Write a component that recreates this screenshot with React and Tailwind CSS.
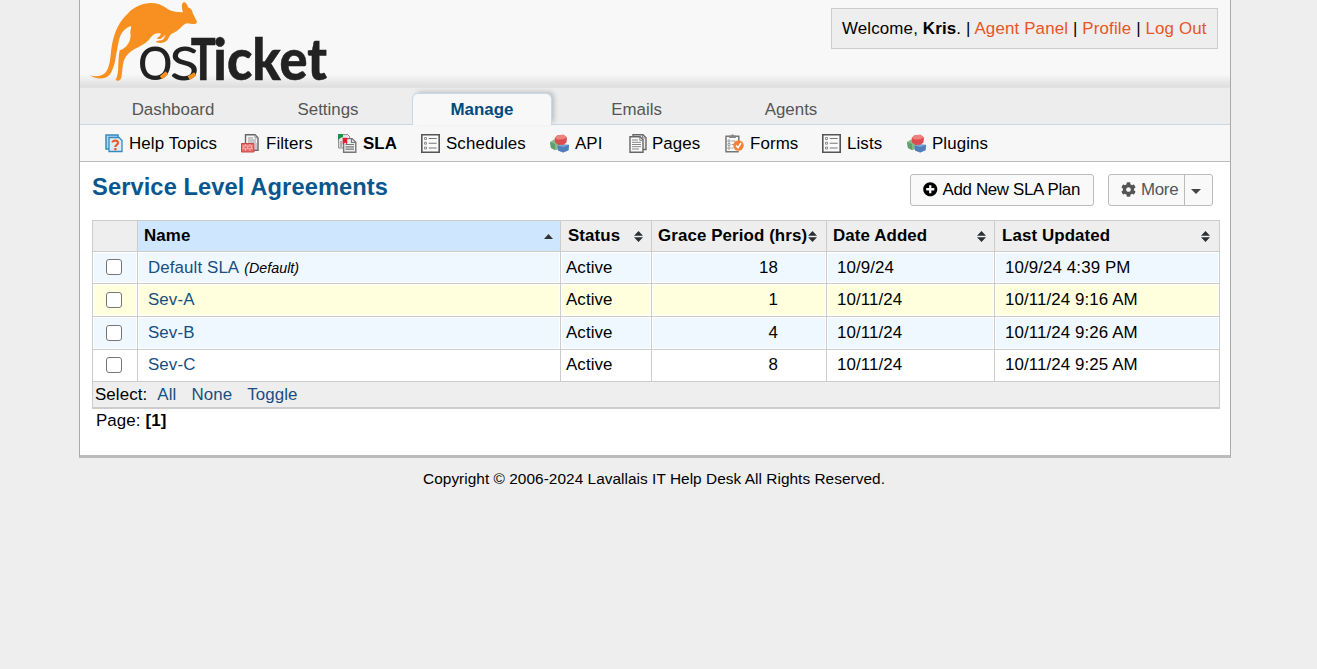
import React from "react";
import { FaPlusCircle, FaCog } from "react-icons/fa";

function Logo() {
  return (
    <svg className="h-[92px] w-[260px] shrink-0 overflow-visible" viewBox="0 0 780 276">
      <path
        fill="#f79020"
        d="M30 226C48 231 66 230 78 216C94 194 90 158 98 124C106 88 122 60 143 41C176 6 226 -1 260 25C279 38 294 36 309 37C304 20 304 10 312 6C320 9 323 15 324 22C331 24 337 29 338 39L351 65C350 74 340 73 322 70C306 73 300 91 280 99C270 102 268 111 262 121C254 129 240 131 227 126C232 120 242 124 250 118L257 104C249 109 244 121 231 116C233 110 239 111 243 101C224 97 217 107 207 119C190 140 157 143 139 168C126 185 129 206 124 232C122 243 113 244 107 240C119 217 112 185 119 151C142 145 155 120 151 99C150 88 158 77 150 79C129 88 120 104 115 130C107 167 106 202 89 224C74 241 44 237 30 226Z"
      />
      <g fontFamily="Lato, sans-serif" fontWeight="300" fontSize="190" fill="#222" stroke="#222" strokeWidth="6">
        <text x="173" y="238" textLength="105" lengthAdjust="spacingAndGlyphs">o</text>
        <text x="270" y="238" textLength="87" lengthAdjust="spacingAndGlyphs">s</text>
      </g>
      <path d="M243 233L261 218M326 234L346 222" stroke="#f79020" strokeWidth="12" fill="none" />
      <text y="240" fontFamily="Lato, sans-serif" fontWeight="900" fontSize="174" fill="#222" stroke="#222" strokeWidth="1.5">
        <tspan x="332" textLength="75" lengthAdjust="spacingAndGlyphs">T</tspan><tspan x="400" textLength="341" lengthAdjust="spacingAndGlyphs">icket</tspan>
      </text>
    </svg>
  );
}

function HelpIcon() {
  return (
    <>
      <path d="M1 1h12v14H1z" fill="#acd9f4" stroke="#3689bd" strokeWidth="1.5" />
      <path d="M4 3.5h10l3 3v11H4z" fill="#d9eefb" stroke="#3689bd" strokeWidth="1.3" />
      <path d="M7.5 8.5C7.5 6 13 6 13 9c0 2-2.7 1.8-2.7 4" fill="none" stroke="#f15a24" strokeWidth="2.2" />
      <path d="M9.2 14h2.3v2.3H9.2z" fill="#f15a24" />
    </>
  );
}
function FilterIcon() {
  return (
    <>
      <path d="M4.5 10V.7h9.5l3 3v12.5h-5" fill="#f4f4f4" stroke="#666" strokeWidth="1.4" />
      <path d="M14 1v3h3M7 4h5M7 6h8M7 8h8M14 10h2M14 12h2M14 14h2" fill="none" stroke="#999" />
      <path d="M.5 9.5h12.5v8.5H.5z" fill="#e46b6b" stroke="#c74848" />
      <path d="M1 12h11M1 14.7h11M4.5 10v2M9 10v2M2.8 12v2.7M6.7 12v2.7M10.5 12v2.7M4.5 15v2M9 15v2" stroke="#f7bcbc" strokeWidth=".8" />
    </>
  );
}
function SlaIcon() {
  return (
    <>
      <path d="M.6.6h9l2 2V14H.6z" fill="#e8e8e8" stroke="#888" />
      <path d="M0 0h5v3L2.5 4 0 6z" fill="#159447" />
      <path d="M5.6 4.6h8.5l3.7 3.6v10H5.6z" fill="#eee" stroke="#777" strokeWidth="1.4" />
      <path d="M13.5 5v3.5h4M7.5 10.5h8.5M7.5 12.8h8.5M7.5 15.2h8.5M2 8h2M2 10h2M2 12h2" fill="none" stroke="#777" strokeWidth="1.2" />
      <path d="M4.7 3.7h4.5v6.8L7 8.4l-2.3 2.1z" fill="#e51c2f" />
    </>
  );
}
function ListIcon() {
  return (
    <>
      <path d="M.8.8h17.4v17.4H.8z" fill="#fafafa" stroke="#555" strokeWidth="1.6" />
      <path d="M3.5 3.5h2v2h-2zM3.5 8.2h2v2h-2zM3.5 13h2v2h-2z" fill="none" stroke="#777" strokeWidth=".8" />
      <path d="M7.7 4.5h8M7.7 9.3h8M7.7 14h8" stroke="#777" strokeWidth="1.1" />
    </>
  );
}
function BlocksIcon() {
  return (
    <>
      <path d="M0 8l4-2.5 6 1.7v7l-4.5 2L1 14z" fill="#86b98a" />
      <path d="M0 8l5 2.1v6L1 14z" fill="#5f9e6e" />
      <path d="M7.5 11.5l5-1.5 6.5.7-.5 5.5L13.2 18.5 8 16.5z" fill="#7ba5d6" />
      <path d="M7.5 11.5l5.7 1.5L19 10.7l-.5 5.5-5.3 2.3L8 16.5z" fill="#507fb9" />
      <path d="M4.7 4L7.5 1.2l6-.4L17 3.5l-.5 5-3 2.3-5 .2L5 8.5z" fill="#dd4d4f" />
      <path d="M4.7 4L7.5 1.2l6-.4L17 3.5l-4 1.8-5 .2z" fill="#f0827e" />
    </>
  );
}
function PagesIcon() {
  return (
    <>
      <path d="M4 .8h10l3 3v11.7H4z" fill="#eee" stroke="#666" strokeWidth="1.4" />
      <path d="M1 2.8h10l3 3v12.4H1z" fill="#fafafa" stroke="#666" strokeWidth="1.4" />
      <path d="M10.8 3v3.4H14M13.5 1v3H17M3 6h6M3 8.3h9M3 10.5h9M3 12.7h9M3 15h7" fill="none" stroke="#888" />
    </>
  );
}
function FormsIcon() {
  return (
    <>
      <path d="M13.8 7V2.3H1v15.5h12.8" fill="#fafafa" stroke="#777" strokeWidth="1.5" />
      <path d="M4 1.5h2L7.5 0 9 1.5h2V4H4z" fill="#888" />
      <path d="M3 6h2v2H3zM3 9.5h2v2H3zM3 13h2v2H3zM6.5 7h4M6.5 10.5h3M6.5 14h2" fill="none" stroke="#999" strokeWidth=".9" />
      <circle cx="13.5" cy="11.5" r="5.2" fill="#f58232" />
      <path d="M11 11.5l2 2.2 3-4.7" fill="none" stroke="#fff" strokeWidth="1.5" />
    </>
  );
}

const tools = [
  ["Help Topics", HelpIcon, "w-[136px] gap-[5px]"],
  ["Filters", FilterIcon, "w-[97px] gap-[6px]"],
  ["SLA", SlaIcon, "w-[83px] gap-[6px] font-bold"],
  ["Schedules", ListIcon, "w-[129px] gap-[6px]"],
  ["API", BlocksIcon, "w-[79px] gap-[6px]"],
  ["Pages", PagesIcon, "w-[96px] gap-[4px]"],
  ["Forms", FormsIcon, "w-[97px] gap-[6px]"],
  ["Lists", ListIcon, "w-[85px] gap-[6px]"],
  ["Plugins", BlocksIcon, "w-[90px] gap-[6px]"],
];

function Sort() {
  return (
    <svg className="mt-[2px] h-[11px] w-[9px] shrink-0" viewBox="0 0 9 11">
      <path d="M4.5 0L9 4.8H0zM0 6.2h9L4.5 11z" fill="#2b3035" />
    </svg>
  );
}

const cols = "grid grid-cols-[45px_423px_91px_175px_168px_225px]";
const head = "flex items-center justify-between border-l border-[#ccc] pb-px";
const cell = "flex items-center border-l border-[#ccc] shadow-[inset_0_0_0_1px_#fff]";

const rows = [
  ["Default SLA", "18", "10/9/24", "10/9/24 4:39 PM", "h-[32px] bg-[#f0f8ff]", "pt-px"],
  ["Sev-A", "1", "10/11/24", "10/11/24 9:16 AM", "h-[33px] bg-[#ffffdd]", "pb-px"],
  ["Sev-B", "4", "10/11/24", "10/11/24 9:26 AM", "h-[33px] bg-[#f0f8ff]", "pb-px"],
  ["Sev-C", "8", "10/11/24", "10/11/24 9:25 AM", "h-[32px] bg-white", "pb-px"],
];

export default function App() {
  return (
    <div className="min-h-screen bg-[#eee] font-['Liberation_Sans',Arial,sans-serif] text-[16.9px] leading-5 tracking-[0.1px] text-black">
      <main className="ml-[79px] h-[458px] w-[1152px] border-x border-b-[3px] border-x-[#aaa] border-b-[#bbb] bg-white">
        <header className="flex h-[87px] items-start justify-between bg-[linear-gradient(#f8f8f8_74px,#dedede_87px)] pr-3">
          <Logo />
          <div className="mt-2 h-[41px] w-[387px] whitespace-nowrap border border-[#ccc] bg-[#eee] pl-[10px] pt-[10px] tracking-[0.15px]">
            Welcome, <b>Kris</b>. | <a className="text-[#e65524]">Agent Panel</a> | <a className="text-[#e65524]">Profile</a> | <a className="text-[#e65524]">Log Out</a>
          </div>
        </header>
        <nav className="flex h-[38px] border-b border-t border-b-[#c5d9e8] border-t-[#e2e2e2] bg-[#ededed] tracking-normal text-[#555]">
          <span className="w-[186px] pt-[12px] text-center">Dashboard</span>
          <span className="w-[124px] pt-[12px] text-center">Settings</span>
          <span className="ml-[22px] mt-[5px] h-[32px] w-[140px] rounded-t-[6px] border border-b-0 border-[#c5d9e8] bg-[#f8f8f8] pt-[6px] text-center font-bold text-[#004a80] shadow-[3px_-2px_5px_-1px_#bbb]">Manage</span>
          <span className="ml-[14px] w-[141px] pt-[12px] text-center">Emails</span>
          <span className="ml-[14px] w-[140px] pt-[12px] text-center">Agents</span>
        </nav>
        <nav className="flex h-[37px] items-center border-b border-[#bbb] bg-[#f7f7f7] pl-[25px]">
          {tools.map(([name, Icon, layout]) => (
            <span key={name} className={"flex shrink-0 items-center whitespace-nowrap " + layout}>
              <svg className="h-[19px] w-[19px] shrink-0" viewBox="0 0 19 19"><Icon /></svg>
              <span className="pt-0.5">{name}</span>
            </span>
          ))}
        </nav>
        <section className="px-3">
          <div className="flex h-[58px] items-start justify-between">
            <h1 className="mt-[11px] text-[23.66px] font-bold leading-7 text-[#0a568e]">Service Level Agreements</h1>
            <div className="mr-[5px] mt-3 flex gap-[14px]">
              <button className="flex h-8 w-[184px] items-center whitespace-nowrap rounded-[3px] border border-[#bbb] bg-[#f9f9f9] pl-3 pb-px tracking-[-0.33px]">
                <FaPlusCircle className="mr-[5px] h-[14.5px] w-[14.5px]" />Add New SLA Plan
              </button>
              <button className="flex h-8 w-[105px] items-center rounded-[3px] border border-[#bbb] bg-[#f9f9f9] pl-3 tracking-normal text-[#555]">
                <FaCog className="mb-0.5 mr-[5px] h-[15px] w-[15px] shrink-0" /><span className="w-[43px] text-left tracking-[-0.3px]">More</span>
                <span className="flex h-full items-center border-l border-[#bbb] pl-[6px] pt-0.5">
                  <svg className="h-[5px] w-[10px]" viewBox="0 0 10 5"><path d="M0 0h10L5 5z" fill="#444" /></svg>
                </span>
              </button>
            </div>
          </div>
          <div className="w-[1128px] border-r border-t border-[#ccc]">
            <div className={cols + " h-[31px] border-b border-[#ccc] bg-[#eee] font-bold"}>
              <span className={head} />
              <span className={head + " bg-[#cfe6ff] pl-[6px] pr-[7px]"}>Name<svg className="mt-0.5 h-[5px] w-[9px]" viewBox="0 0 9 5"><path d="M4.5 0L9 5H0z" fill="#333" /></svg></span>
              <span className={head + " pl-[7px] pr-[8px]"}>Status<Sort /></span>
              <span className={head + " whitespace-nowrap pl-[6px] pr-[9px]"}>Grace Period (hrs)<Sort /></span>
              <span className={head + " pl-[6px] pr-[8px]"}>Date Added<Sort /></span>
              <span className={head + " pl-[7px] pr-[9px]"}>Last Updated<Sort /></span>
            </div>
            {rows.map(([name, grace, added, updated, style, nudge]) => (
              <div key={name} className={cols + " border-b border-[#ccc] " + style}>
                <span className={cell + " pb-px pl-[13px]"}><input type="checkbox" className="h-4 w-4 appearance-none rounded-[3px] border border-[#767676] bg-white" /></span>
                <span className={cell + " pl-[10px] text-[#184e81] " + nudge}>{name}{name === "Default SLA" && <i className="ml-[5px] text-[14.3px] tracking-normal text-black">(Default)</i>}</span>
                <span className={cell + " pl-[5px] " + nudge}>Active</span>
                <span className={cell + " justify-end pr-[48px] " + nudge}>{grace}</span>
                <span className={cell + " pl-[10px] " + nudge}>{added}</span>
                <span className={cell + " pl-[10px] " + nudge}>{updated}</span>
              </div>
            ))}
            <div className="flex h-[27px] items-center border-b-2 border-l border-[#ccc] bg-[#eee] pl-[2px]">
              Select:<span className="ml-[10px] flex gap-[15px] text-[#184e81]"><a>All</a><a>None</a><a>Toggle</a></span>
            </div>
          </div>
          <div className="pl-[4px] pt-[2px]">Page: <b>[1]</b></div>
        </section>
      </main>
      <footer className="ml-[79px] w-[1150px] pt-[11px] text-center text-[15.4px] tracking-[0.04px]">Copyright © 2006-2024 Lavallais IT Help Desk All Rights Reserved.</footer>
    </div>
  );
}
